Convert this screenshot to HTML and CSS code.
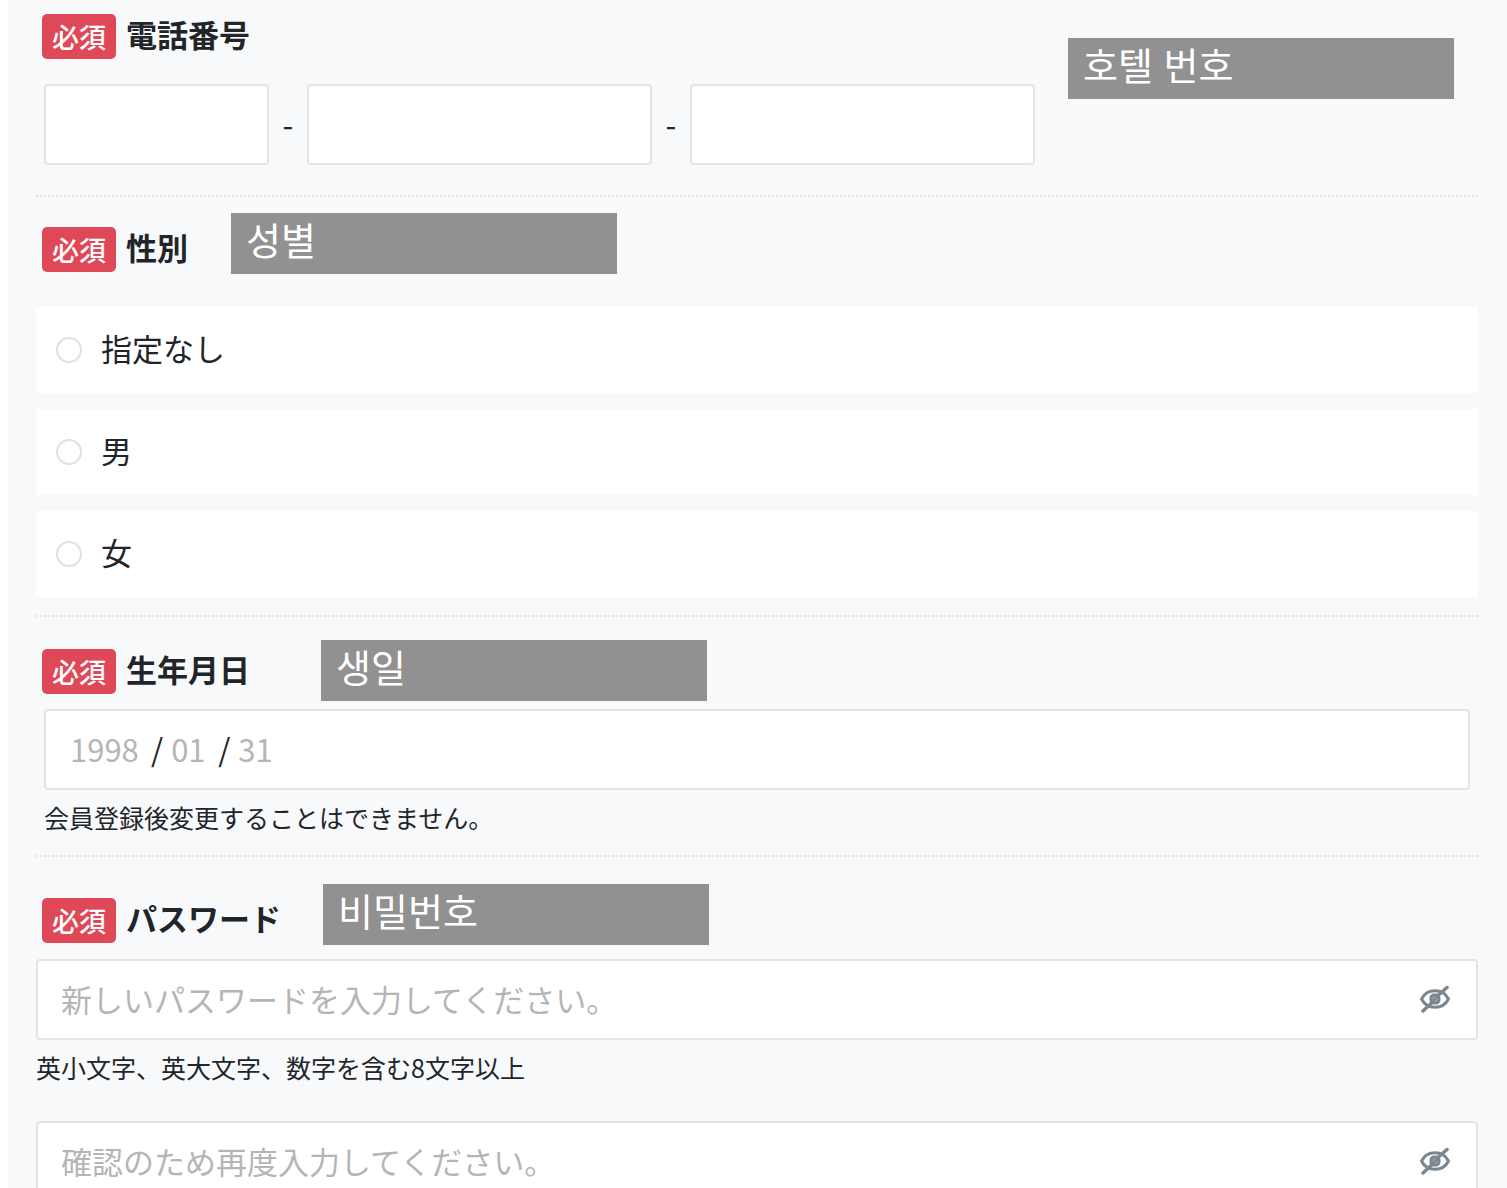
FILE: index.html
```html
<!DOCTYPE html>
<html lang="ja">
<head>
    <meta charset="UTF-8">
    <meta name="viewport" content="width=device-width, initial-scale=1.0">
    <title>会員登録</title>
    <link rel="stylesheet" href="styles.css">
</head>
<body>
    <form class="form">
        <section class="section phone">
            <div class="heading">
                <span class="badge">必須</span>
                <label class="title" for="tel1">電話番号</label>
            </div>
            <div class="phone-row">
                <input class="box" id="tel1" type="tel" aria-label="電話番号 1">
                <span class="dash">-</span>
                <input class="box" type="tel" aria-label="電話番号 2">
                <span class="dash">-</span>
                <input class="box" type="tel" aria-label="電話番号 3">
            </div>
            <div class="note note-phone" lang="ko">호텔 번호</div>
        </section>

        <section class="section gender" role="radiogroup" aria-labelledby="gender-title">
            <div class="heading">
                <span class="badge">必須</span>
                <span class="title" id="gender-title">性別</span>
            </div>
            <div class="options">
                <label class="option"><input class="radio" type="radio" name="gender" value="none"><span class="option-text">指定なし</span></label>
                <label class="option"><input class="radio" type="radio" name="gender" value="male"><span class="option-text">男</span></label>
                <label class="option"><input class="radio" type="radio" name="gender" value="female"><span class="option-text">女</span></label>
            </div>
            <div class="note note-gender" lang="ko">성별</div>
        </section>

        <section class="section birthday">
            <div class="heading">
                <span class="badge">必須</span>
                <label class="title" for="year">生年月日</label>
            </div>
            <div class="box date">
                <input class="date-part year" id="year" type="text" inputmode="numeric" placeholder="1998" aria-label="年">
                <span class="slash">/</span>
                <input class="date-part" type="text" inputmode="numeric" placeholder="01" aria-label="月">
                <span class="slash">/</span>
                <input class="date-part" type="text" inputmode="numeric" placeholder="31" aria-label="日">
            </div>
            <p class="help">会員登録後変更することはできません。</p>
            <div class="note note-birthday" lang="ko">생일</div>
        </section>

        <section class="section password">
            <div class="heading">
                <span class="badge">必須</span>
                <label class="title" for="password">パスワード</label>
            </div>
            <div class="box secret">
                <input class="secret-input" id="password" type="password" placeholder="新しいパスワードを入力してください。">
                <button class="eye" type="button" aria-label="パスワードを表示">
                    <svg width="32" height="28" viewBox="0 0 32 28" fill="none" stroke="#7b8790" stroke-width="3" stroke-linecap="round">
                        <path d="M2.500 14C8 3 24 3 29.500 14C24 25 8 25 2.500 14Z"/>
                        <rect x="12" y="10" width="8" height="8" rx="3" fill="#98a2a9"/>
                        <path d="M4 26L13 17.500M19 10.500L28 2.500" stroke-width="3.500"/>
                        <path d="M14.500 15.500L17.500 12.500" stroke-width="2"/>
                    </svg>
                </button>
            </div>
            <p class="help">英小文字、英大文字、数字を含む8文字以上</p>
            <div class="box secret">
                <input class="secret-input" type="password" placeholder="確認のため再度入力してください。" aria-label="パスワード確認">
                <button class="eye" type="button" aria-label="パスワードを表示">
                    <svg width="32" height="28" viewBox="0 0 32 28" fill="none" stroke="#7b8790" stroke-width="3" stroke-linecap="round">
                        <path d="M2.500 14C8 3 24 3 29.500 14C24 25 8 25 2.500 14Z"/>
                        <rect x="12" y="10" width="8" height="8" rx="3" fill="#98a2a9"/>
                        <path d="M4 26L13 17.500M19 10.500L28 2.500" stroke-width="3.500"/>
                        <path d="M14.500 15.500L17.500 12.500" stroke-width="2"/>
                    </svg>
                </button>
            </div>
            <div class="note note-password" lang="ko">비밀번호</div>
        </section>
    </form>
</body>
</html>
```
FILE: styles.css
```css
* {
    box-sizing: border-box;
}
body {
    height: 100vh;
    margin: 0;
    overflow: hidden;
    background: #fff;
    color: #212529;
    font-family: "Noto Sans CJK JP", sans-serif;
    font-size: 31px;
}
input,
button {
    font: inherit;
    color: inherit;
}
.form {
    min-height: 100%;
    margin-left: 8px;
    padding: 0 29px 0 28px;
    background: #f8f9fb;
}
.section {
    position: relative;
    border-bottom: 2px dotted #dfe1e3;
}
.heading {
    display: flex;
    align-items: flex-start;
    gap: 10px;
    height: 45px;
    padding-left: 6px;
}
.badge {
    padding: 0 10px;
    border-radius: 5px;
    background: #df4857;
    color: #fff;
    font-size: 27px;
    font-weight: 500;
    line-height: 45px;
}
.title {
    font-weight: 700;
    line-height: 40px;
}
.box {
    width: 100%;
    height: 81px;
    border: 2px solid #e3e4e5;
    border-radius: 4px;
    background: #fff;
}

/* Phone number */
.phone {
    padding: 14px 0 30px;
}
.phone-row {
    display: grid;
    grid-template-columns: 225fr 38px 345fr 38px 345fr;
    align-items: center;
    max-width: 999px;
    margin-top: 25px;
    padding-left: 8px;
}
.dash {
    padding-bottom: 2px;
    text-align: center;
}

/* Gender */
.gender {
    padding: 30px 0 18px;
}
.options {
    display: flex;
    flex-direction: column;
    gap: 16px;
    margin-top: 35px;
}
.option {
    display: flex;
    align-items: center;
    gap: 19px;
    height: 86px;
    padding-left: 20px;
    background: #fff;
}
.option-text {
    padding-bottom: 5px;
}
.radio {
    appearance: none;
    width: 26px;
    height: 26px;
    margin: 0;
    border: 2px solid #e0e0e0;
    border-radius: 50%;
    background: #fff;
}
.radio:checked {
    border: 8px solid #df4857;
}

/* Birthday */
.birthday {
    padding: 32px 8px 19px;
}
.birthday .heading {
    margin-left: -8px;
}
.date {
    display: flex;
    align-items: center;
    margin-top: 15px;
    padding: 0 24px 2px;
}
.date-part {
    width: 47px;
    padding: 0;
    border: 0;
    outline: 0;
    background: none;
}
.year {
    width: 81px;
}
.slash {
    margin-right: 8px;
}
input::placeholder {
    color: #b5b5b5;
    opacity: 1;
}
.help {
    margin: 8px 0 0;
    font-size: 25px;
    line-height: 38px;
}

/* Password */
.password {
    padding-top: 41px;
    border-bottom: 0;
}
.secret {
    display: flex;
    align-items: center;
    margin-top: 16px;
    padding: 0 25px 2px 23px;
}
.help + .secret {
    margin-top: 35px;
}
.secret-input {
    flex: 1;
    min-width: 0;
    padding: 0;
    border: 0;
    outline: 0;
    background: none;
}
.eye {
    display: flex;
    padding: 0;
    border: 0;
    background: none;
    cursor: pointer;
}

/* Korean notes laid over the form */
.note {
    position: absolute;
    width: 386px;
    height: 61px;
    padding-left: 15px;
    background: #919191;
    color: #fff;
    font-family: "Noto Sans CJK KR", sans-serif;
    font-size: 38px;
    line-height: 52px;
}
.note-phone {
    top: 38px;
    right: 24px;
}
.note-gender {
    top: 16px;
    left: 195px;
}
.note-birthday {
    top: 23px;
    left: 285px;
}
.note-password {
    top: 27px;
    left: 287px;
}
```
